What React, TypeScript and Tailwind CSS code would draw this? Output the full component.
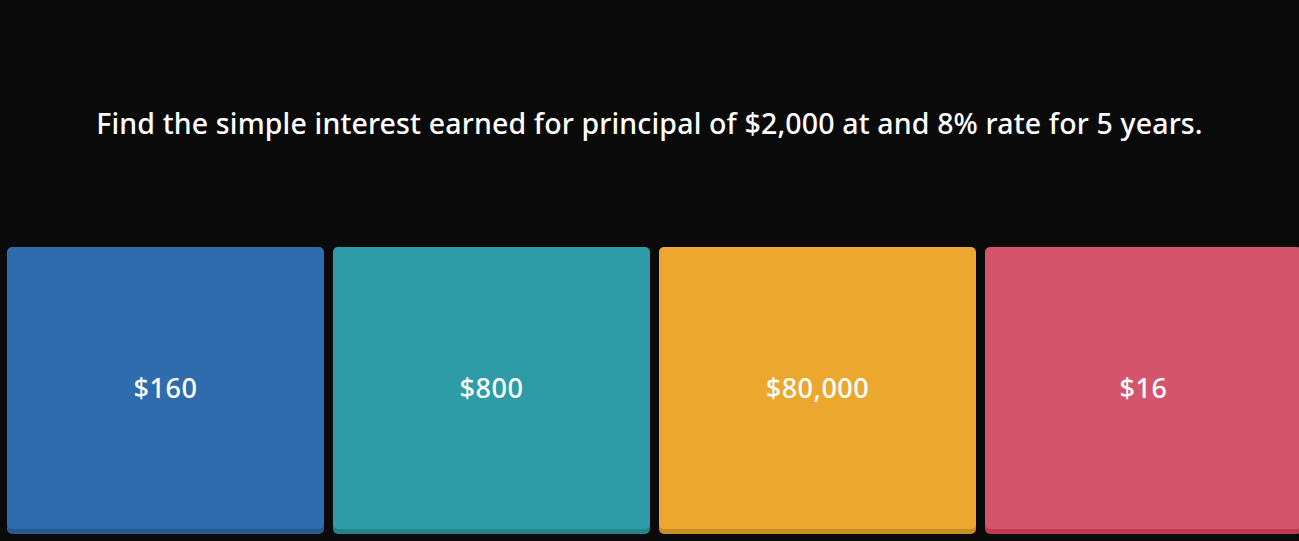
import React from "react";

const answers = [
  { text: "$160", bg: "bg-[#2f6cad]", shadow: "shadow-[0_5px_0_#275a90]" },
  { text: "$800", bg: "bg-[#2d9ca6]", shadow: "shadow-[0_5px_0_#25828a]" },
  { text: "$80,000", bg: "bg-[#eba72e]", shadow: "shadow-[0_5px_0_#c98e24]" },
  { text: "$16", bg: "bg-[#d4556b]", shadow: "shadow-[0_5px_0_#bd3a50]" },
];

export default function App() {
  return (
    <div
      className="w-[1299px] h-[541px] bg-[#0a0a0a] overflow-hidden flex flex-col"
      style={{ fontFamily: '"Noto Sans", "Open Sans", sans-serif' }}
    >
      <div className="h-[247px] flex items-center justify-center">
        <p className="text-white text-[28.5px] tracking-[0.15px] font-medium leading-none">
          Find the simple interest earned for principal of $2,000 at and 8% rate for 5 years.
        </p>
      </div>
      <div className="flex gap-[9px] pl-[7px]">
        {answers.map((a) => (
          <div
            key={a.text}
            className={`w-[317px] h-[282px] shrink-0 rounded-[5px] flex items-center justify-center ${a.bg} ${a.shadow}`}
          >
            <span className="text-white text-[27px] tracking-[0.5px] font-medium">{a.text}</span>
          </div>
        ))}
      </div>
    </div>
  );
}
